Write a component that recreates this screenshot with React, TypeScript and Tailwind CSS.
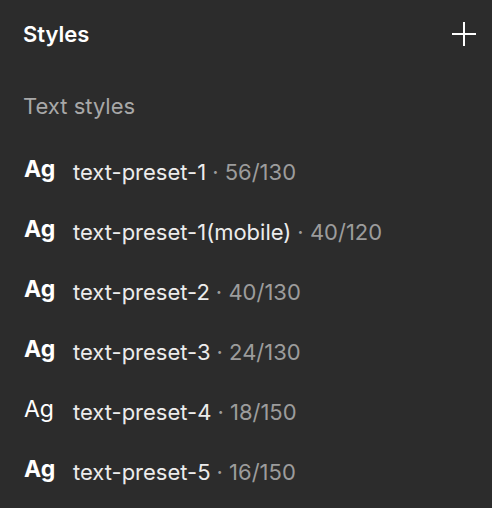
import { Plus } from "lucide-react";

const presets = [
  { name: "text-preset-1", meta: "56/130", bold: true },
  { name: "text-preset-1(mobile)", meta: "40/120", bold: true },
  { name: "text-preset-2", meta: "40/130", bold: true },
  { name: "text-preset-3", meta: "24/130", bold: true },
  { name: "text-preset-4", meta: "18/150", bold: false },
  { name: "text-preset-5", meta: "16/150", bold: true },
];

export default function App() {
  return (
    <div
      className="w-[492px] h-[508px] bg-[#2c2c2c] text-white overflow-hidden"
      style={{ fontFamily: "Inter, 'Noto Sans', sans-serif" }}
    >
      <div className="flex items-center justify-between pl-[23px] pr-[15px] h-[68px]">
        <h1 className="text-[22px] font-semibold leading-none">Styles</h1>
        <svg width="26" height="26" viewBox="0 0 26 26" fill="none" stroke="white" strokeWidth="2">
          <path d="M13 1v24M1 13h24" />
        </svg>
      </div>
      <div className="pl-[23px] pt-[27px] h-[74px] text-[22px] leading-none text-[#a8a8a8]">
        Text styles
      </div>
      <ul>
        {presets.map((p) => (
          <li key={p.name} className="flex items-center h-[60px] pl-[24px] text-[22px]">
            <span className={"w-[49px] text-[23px] -mt-[6px] " + (p.bold ? "font-bold" : "font-normal")}>Ag</span>
            <span className="text-[#ececec]">{p.name}</span>
            <span className="text-[#9c9c9c] ml-[6px]">· {p.meta}</span>
          </li>
        ))}
      </ul>
    </div>
  );
}
